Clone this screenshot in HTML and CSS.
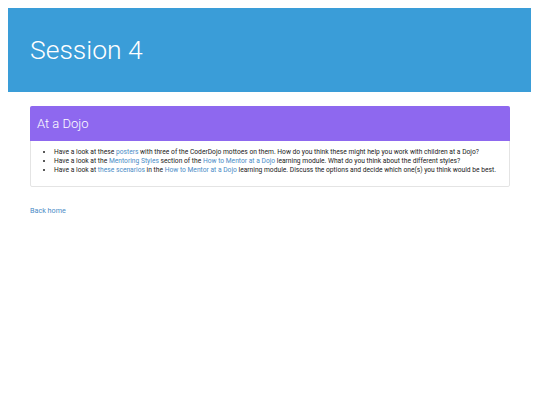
FILE: index.html
```html
<!DOCTYPE html>
<html>
<head>
<meta charset="utf-8">
<link rel="stylesheet" href="styles.css">
</head>
<body>
<header class="hero">
  <h1 class="hero-title">Session 4</h1>
</header>
<main class="container">
  <section class="panel">
    <div class="panel-heading">
      <h2 class="panel-title">At a Dojo</h2>
    </div>
    <div class="panel-body">
      <ul class="tasks">
        <li>Have a look at these <a href="#">posters</a> with three of the CoderDojo mottoes on them. How do you think these might help you work with children at a Dojo?</li>
        <li>Have a look at the <a href="#">Mentoring Styles</a> section of the <a href="#">How to Mentor at a Dojo</a> learning module. What do you think about the different styles?</li>
        <li>Have a look at <a href="#">these scenarios</a> in the <a href="#">How to Mentor at a Dojo</a> learning module. Discuss the options and decide which one(s) you think would be best.</li>
      </ul>
    </div>
  </section>
  <p class="back"><a href="#">Back home</a></p>
</main>
</body>
</html>
```

FILE: styles.css
```css
html, body {
  margin: 0;
  padding: 0;
}
body {
  margin: 8px;
  font-family: Roboto, "Liberation Sans", sans-serif;
  color: #333;
  background: #fff;
}
a {
  color: #4a8cc6;
  text-decoration: none;
}
.hero {
  background: #3a9dd8;
  height: 84px;
  display: flex;
  align-items: center;
  padding: 0 22px;
  margin-right: 1px;
}
.hero-title {
  margin: 0;
  font-weight: 300;
  font-size: 26.5px;
  color: #fff;
  line-height: 1;
}
.container {
  padding: 14px 22px 0 22px;
  width: 480px;
}
.panel {
  border: 1px solid #e4e4e4;
  border-radius: 2px;
  background: #fff;
}
.panel-heading {
  background: #8e68ef;
  height: 35px;
  display: flex;
  align-items: center;
  padding: 0 7px;
  margin: -1px -1px 0 -1px;
  border-radius: 2px 2px 0 0;
}
.panel-title {
  margin: 0;
  font-weight: 300;
  font-size: 13px;
  color: #fff;
  line-height: 1;
}
.panel-body {
  padding: 7px 10px 11px 10px;
}
.tasks {
  margin: 0;
  padding-left: 13px;
  font-size: 6.7px;
  line-height: 9px;
  color: #222;
}
.back {
  margin: 19px 0 0 0;
  font-size: 7.2px;
}
```
